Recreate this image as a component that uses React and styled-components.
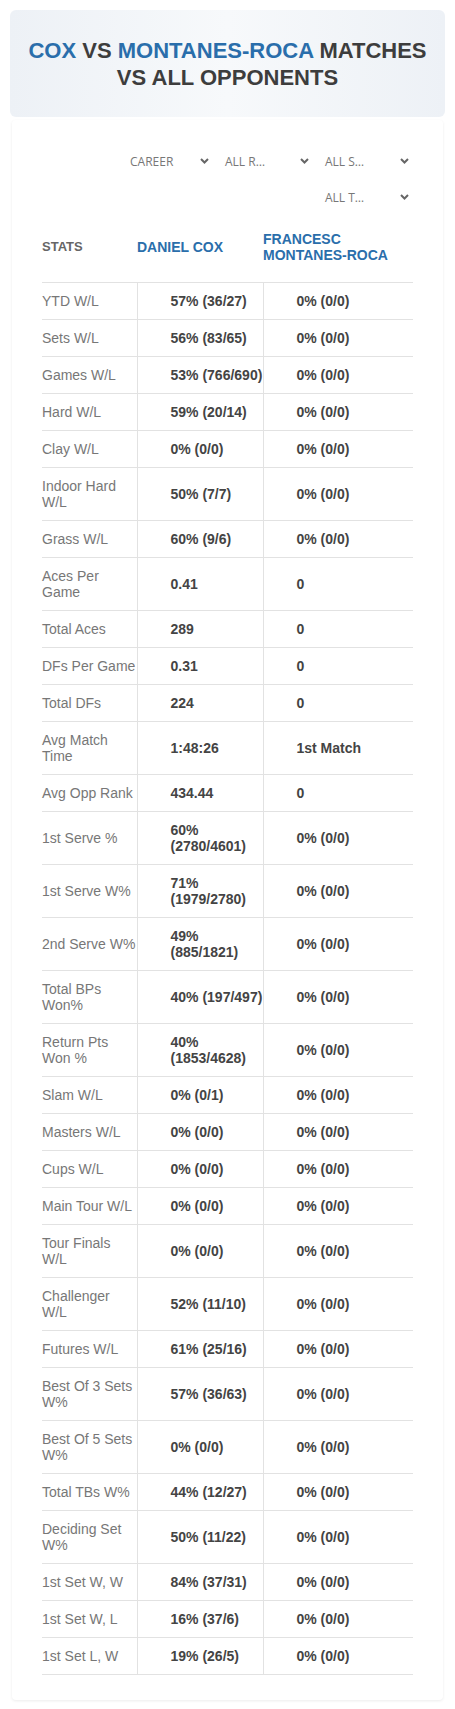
import React from 'react'
import styled, { createGlobalStyle } from 'styled-components'

const GlobalStyle = createGlobalStyle`
  body {
    margin: 0;
    background: #fff;
    font-family: 'Liberation Sans', Arial, sans-serif;
  }
`

const stats = [
  ['YTD W/L', '57% (36/27)', '0% (0/0)'],
  ['Sets W/L', '56% (83/65)', '0% (0/0)'],
  ['Games W/L', '53% (766/690)', '0% (0/0)'],
  ['Hard W/L', '59% (20/14)', '0% (0/0)'],
  ['Clay W/L', '0% (0/0)', '0% (0/0)'],
  ['Indoor Hard W/L', '50% (7/7)', '0% (0/0)'],
  ['Grass W/L', '60% (9/6)', '0% (0/0)'],
  ['Aces Per Game', '0.41', '0'],
  ['Total Aces', '289', '0'],
  ['DFs Per Game', '0.31', '0'],
  ['Total DFs', '224', '0'],
  ['Avg Match Time', '1:48:26', '1st Match'],
  ['Avg Opp Rank', '434.44', '0'],
  ['1st Serve %', '60% (2780/4601)', '0% (0/0)'],
  ['1st Serve W%', '71% (1979/2780)', '0% (0/0)'],
  ['2nd Serve W%', '49% (885/1821)', '0% (0/0)'],
  ['Total BPs Won%', '40% (197/497)', '0% (0/0)'],
  ['Return Pts Won %', '40% (1853/4628)', '0% (0/0)'],
  ['Slam W/L', '0% (0/1)', '0% (0/0)'],
  ['Masters W/L', '0% (0/0)', '0% (0/0)'],
  ['Cups W/L', '0% (0/0)', '0% (0/0)'],
  ['Main Tour W/L', '0% (0/0)', '0% (0/0)'],
  ['Tour Finals W/L', '0% (0/0)', '0% (0/0)'],
  ['Challenger W/L', '52% (11/10)', '0% (0/0)'],
  ['Futures W/L', '61% (25/16)', '0% (0/0)'],
  ['Best Of 3 Sets W%', '57% (36/63)', '0% (0/0)'],
  ['Best Of 5 Sets W%', '0% (0/0)', '0% (0/0)'],
  ['Total TBs W%', '44% (12/27)', '0% (0/0)'],
  ['Deciding Set W%', '50% (11/22)', '0% (0/0)'],
  ['1st Set W, W', '84% (37/31)', '0% (0/0)'],
  ['1st Set W, L', '16% (37/6)', '0% (0/0)'],
  ['1st Set L, W', '19% (26/5)', '0% (0/0)'],
]

const filters = ['CAREER', 'ALL R…', 'ALL S…', 'ALL T…']

const Chevron = () => (
  <svg width="9" height="6" viewBox="0 0 9 6">
    <polyline
      points="1,1 4.5,4.5 8,1"
      fill="none"
      stroke="#666"
      strokeWidth="2"
    />
  </svg>
)

const App = () => (
  <Page>
    <GlobalStyle />
    <TitleBox>
      <Title>
        <Name>COX</Name> VS <Name>MONTANES-ROCA</Name> MATCHES VS ALL OPPONENTS
      </Title>
    </TitleBox>
    <Card>
      <Filters>
        {filters.map((f, i) => (
          <Select key={f} first={i === 0}>
            <span>{f}</span>
            <Chevron />
          </Select>
        ))}
      </Filters>
      <Table>
        <colgroup>
          <col style={{ width: 95 }} />
          <col style={{ width: 126 }} />
          <col />
        </colgroup>
        <thead>
          <tr>
            <Th>STATS</Th>
            <Th player>DANIEL COX</Th>
            <Th player>FRANCESC MONTANES-ROCA</Th>
          </tr>
        </thead>
        <tbody>
          {stats.map(([label, a, b]) => (
            <tr key={label}>
              <Label>{label}</Label>
              <Value middle>{a}</Value>
              <Value>{b}</Value>
            </tr>
          ))}
        </tbody>
      </Table>
    </Card>
  </Page>
)

export default App

const Page = styled.div`
  padding: 10px 10px 10px;
`

const TitleBox = styled.div`
  height: 107px;
  border-radius: 6px;
  background: linear-gradient(90deg, #edf1f6 0%, #f7f9fb 50%, #edf1f6 100%);
  display: flex;
  align-items: center;
  justify-content: center;
  padding: 0 10px;
  box-sizing: border-box;
`

const Title = styled.h1`
  margin: 0;
  font-size: 22px;
  line-height: 27px;
  font-weight: 700;
  color: #3d3d3d;
  text-align: center;
  text-transform: uppercase;
`

const Name = styled.span`
  color: #2a6eab;
`

const Card = styled.div`
  margin: 3px 2px 0;
  padding: 26px 30px 25px;
  background: #fff;
  border-radius: 4px;
  box-shadow: 0 1px 3px rgba(0, 0, 0, 0.08);
`

const Filters = styled.div`
  display: flex;
  flex-wrap: wrap;
  justify-content: flex-end;
  row-gap: 6px;
`

const Select = styled.div`
  width: 100px;
  height: 30px;
  box-sizing: border-box;
  padding: 0 4px 0 ${p => (p.first ? 17 : 12)}px;
  display: flex;
  align-items: center;
  justify-content: space-between;
  font-family: 'Open Sans', sans-serif;
  font-size: 12px;
  color: #777;
`

const Table = styled.table`
  width: 100%;
  border-collapse: collapse;
  table-layout: fixed;
  font-size: 14px;
  line-height: 16px;
  tbody tr:last-child td {
    border-bottom: 1px solid #e2e2e2;
  }
`

const Th = styled.th`
  height: 70px;
  padding: 0;
  box-sizing: border-box;
  text-align: left;
  vertical-align: middle;
  font-size: ${p => (p.player ? 14 : 13)}px;
  line-height: 16px;
  font-weight: 700;
  color: ${p => (p.player ? '#2a6eab' : '#666')};
`

const Label = styled.td`
  padding: 10px 0;
  border-top: 1px solid #e2e2e2;
  color: #777;
  vertical-align: middle;
`

const Value = styled.td`
  padding: 10px 0 10px 33px;
  border-top: 1px solid #e2e2e2;
  font-weight: 700;
  color: #444;
  vertical-align: middle;
  ${p =>
    p.middle &&
    `
    border-left: 1px solid #e2e2e2;
    border-right: 1px solid #e2e2e2;
  `}
`
